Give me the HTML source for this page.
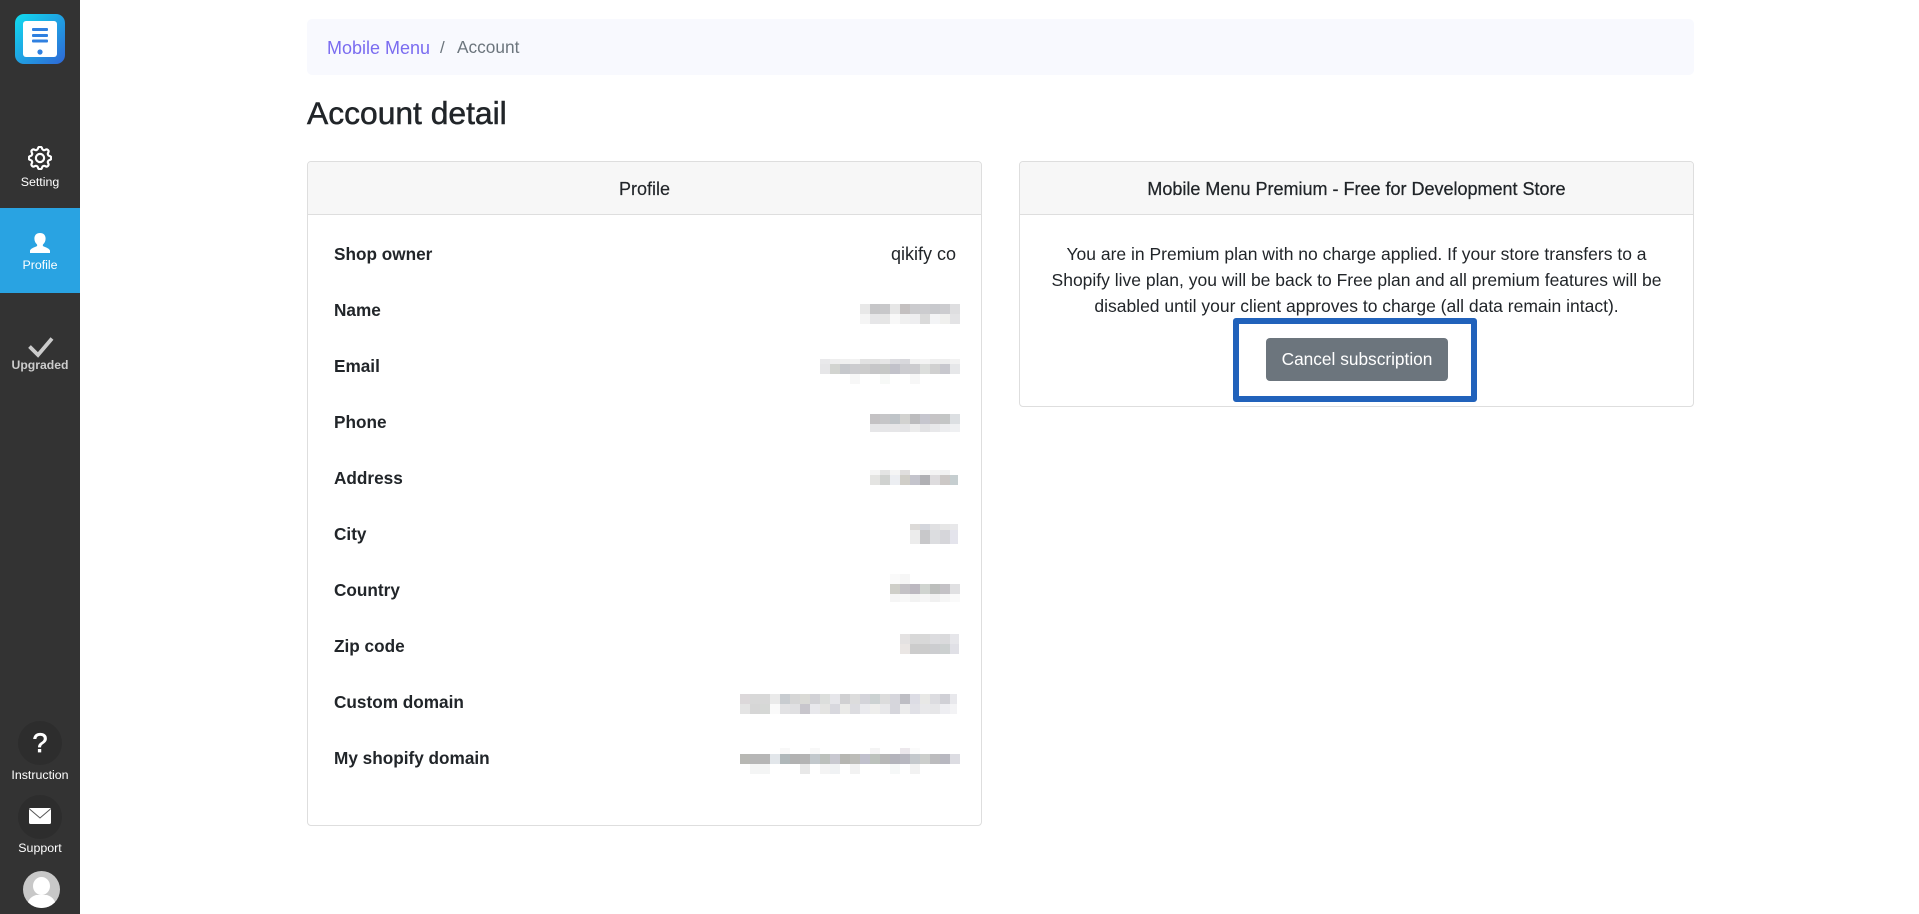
<!DOCTYPE html>
<html lang="en"><head><meta charset="utf-8"><title>Account detail</title>
<style>
*{box-sizing:border-box}
html,body{margin:0;padding:0;width:1919px;height:914px;overflow:hidden;background:#fff;font-family:"Liberation Sans",sans-serif;color:#212529}
.a{position:absolute;white-space:nowrap;line-height:1}
.side{position:absolute;left:0;top:0;width:80px;height:914px;background:#333}
.act{position:absolute;left:0;top:208px;width:80px;height:85px;background:#29a3e2}
.n{position:absolute;left:0;width:80px;text-align:center;font-size:12.400px;line-height:14px;color:#fff}
.card{position:absolute;background:#fff;border:1px solid #dedede;border-radius:4px;overflow:hidden}
.hd{position:absolute;left:0;top:0;right:0;height:53px;background:#f7f7f7;border-bottom:1px solid #dedede;text-align:center;font-size:18px;line-height:54px}
.l{position:absolute;left:334px;font-weight:bold;font-size:17.200px;line-height:20px;color:#212529}
.c{position:absolute;left:1019px;width:675px;text-align:center;font-size:17.500px;line-height:26px;white-space:nowrap}
svg.o{position:absolute;left:0;top:0}
svg.o rect{width:10px;height:10px}
</style></head><body>
<div class="side"></div><div class="act"></div>

<svg class="a" style="left:15px;top:14px" width="50" height="50" viewBox="0 0 50 50"><defs><linearGradient id="g" x1="0" y1="0" x2="1" y2="1"><stop offset="0" stop-color="#10dcef"/><stop offset="1" stop-color="#2f66d6"/></linearGradient></defs><rect width="50" height="50" rx="9" fill="url(#g)"/><rect x="8" y="7" width="34" height="36" rx="3" fill="#fff"/><g fill="#2f80e0"><rect x="17" y="14" width="16" height="3" rx="1"/><rect x="17" y="20" width="16" height="3" rx="1"/><rect x="17" y="25.500" width="16" height="3" rx="1"/><circle cx="25" cy="38" r="2.600"/></g></svg>

<svg class="a" style="left:28px;top:146px" width="24" height="24" viewBox="0 0 16 16" fill="#fff" stroke="#fff" stroke-width=".45"><path d="M8 4.754a3.246 3.246 0 1 0 0 6.492 3.246 3.246 0 0 0 0-6.492zM5.754 8a2.246 2.246 0 1 1 4.492 0 2.246 2.246 0 0 1-4.492 0z"/><path d="M9.796 1.343c-.527-1.79-3.065-1.79-3.592 0l-.094.319a.873.873 0 0 1-1.255.52l-.292-.16c-1.64-.892-3.433.902-2.54 2.541l.159.292a.873.873 0 0 1-.52 1.255l-.319.094c-1.79.527-1.79 3.065 0 3.592l.319.094a.873.873 0 0 1 .52 1.255l-.16.292c-.892 1.64.901 3.434 2.541 2.54l.292-.159a.873.873 0 0 1 1.255.52l.094.319c.527 1.79 3.065 1.79 3.592 0l.094-.319a.873.873 0 0 1 1.255-.52l.292.16c1.64.893 3.434-.902 2.54-2.541l-.159-.292a.873.873 0 0 1 .52-1.255l.319-.094c1.79-.527 1.79-3.065 0-3.592l-.319-.094a.873.873 0 0 1-.52-1.255l.16-.292c.893-1.64-.902-3.433-2.541-2.54l-.292.159a.873.873 0 0 1-1.255-.52l-.094-.319zm-2.633.283c.246-.835 1.428-.835 1.674 0l.094.319a1.873 1.873 0 0 0 2.693 1.115l.291-.16c.764-.415 1.6.42 1.184 1.185l-.159.292a1.873 1.873 0 0 0 1.116 2.692l.318.094c.835.246.835 1.428 0 1.674l-.319.094a1.873 1.873 0 0 0-1.115 2.693l.16.291c.415.764-.42 1.6-1.185 1.184l-.291-.159a1.873 1.873 0 0 0-2.693 1.116l-.094.318c-.246.835-1.428.835-1.674 0l-.094-.319a1.873 1.873 0 0 0-2.692-1.115l-.292.16c-.764.415-1.6-.42-1.184-1.185l.159-.291A1.873 1.873 0 0 0 1.945 8.93l-.319-.094c-.835-.246-.835-1.428 0-1.674l.319-.094A1.873 1.873 0 0 0 3.06 4.377l-.16-.292c-.415-.764.42-1.6 1.185-1.184l.292.159a1.873 1.873 0 0 0 2.692-1.115l.094-.319z"/></svg>
<div class="n" style="top:175px">Setting</div>

<svg class="a" style="left:30px;top:233px" width="20" height="20" viewBox="0 0 20 20" fill="#fff"><path d="M10 0c3.600 0 5.600 2.300 5.600 5.600 0 2.400-1.100 4.500-2.500 5.800-.5.600-.4 1.600.4 2 2.300 1 5.500 1.900 6.500 4.100V20H0v-2.500c1-2.200 4.200-3.100 6.500-4.100.8-.4.900-1.400.4-2C5.500 10.100 4.400 8 4.400 5.600 4.400 2.300 6.400 0 10 0z"/></svg>
<div class="n" style="top:258px">Profile</div>

<svg class="a" style="left:27px;top:337px" width="27" height="22" viewBox="0 0 27 22"><path d="M2.500 9.500 L11 18 L25 1.500" fill="none" stroke="#ccc" stroke-width="3.800"/></svg>
<div class="n" style="top:358px;font-weight:bold;color:#ccc;font-size:12.200px">Upgraded</div>

<div class="a" style="left:18px;top:721px;width:44px;height:44px;border-radius:50%;background:#2d2d2d"></div>
<div class="a" style="left:18px;top:730px;width:44px;text-align:center;font-size:27px;color:#fff;-webkit-text-stroke:.7px #fff">?</div>
<div class="n" style="top:768px">Instruction</div>

<div class="a" style="left:18px;top:795px;width:44px;height:44px;border-radius:50%;background:#2d2d2d"></div>
<svg class="a" style="left:29px;top:808px" width="22" height="16" viewBox="0 0 22 16"><rect width="22" height="16" rx="1.500" fill="#fff"/><path d="M.5 1 L11 10 L21.500 1" fill="none" stroke="#555" stroke-width="1"/></svg>
<div class="n" style="top:841px">Support</div>

<svg class="a" style="left:23px;top:871px" width="37" height="37" viewBox="0 0 37 37"><circle cx="18.500" cy="18.500" r="18.500" fill="#c8c8c8"/><clipPath id="cp"><circle cx="18.500" cy="18.500" r="18.500"/></clipPath><g clip-path="url(#cp)" fill="#fff"><ellipse cx="18.500" cy="15" rx="8.500" ry="9"/><path d="M4 37c0-7 3-11 9-13h11c6 2 9 6 9 13z"/></g></svg>

<div class="a" style="left:307px;top:19px;width:1387px;height:56px;background:#f8f9fe;border-radius:5px"></div>
<div class="a" style="left:327px;top:39px;font-size:18px;color:#7a6cf0">Mobile Menu</div>
<div class="a" style="left:440px;top:39px;font-size:17px;color:#6c757d">/</div>
<div class="a" style="left:457px;top:39px;font-size:17.300px;color:#6c757d">Account</div>

<div class="a" style="left:307px;top:98px;font-size:31.800px;font-weight:normal;-webkit-text-stroke:.5px #212529;color:#212529">Account detail</div>

<div class="card" style="left:307px;top:161px;width:675px;height:665px"><div class="hd" style="-webkit-text-stroke:.15px #212529">Profile</div></div>
<div class="card" style="left:1019px;top:161px;width:675px;height:246px"><div class="hd" style="-webkit-text-stroke:.25px #212529">Mobile Menu Premium - Free for Development Store</div></div>

<div class="l" style="top:244px">Shop owner</div>
<div class="l" style="top:300px">Name</div>
<div class="l" style="top:356px">Email</div>
<div class="l" style="top:412px">Phone</div>
<div class="l" style="top:468px">Address</div>
<div class="l" style="top:524px">City</div>
<div class="l" style="top:580px">Country</div>
<div class="l" style="top:636px">Zip code</div>
<div class="l" style="top:692px">Custom domain</div>
<div class="l" style="top:748px">My shopify domain</div>
<div class="a" style="right:963px;top:245px;font-size:18px">qikify co</div>

<div class="c" style="top:241px">You are in Premium plan with no charge applied. If your store transfers to a</div>
<div class="c" style="top:267px">Shopify live plan, you will be back to Free plan and all premium features will be</div>
<div class="c" style="top:293px">disabled until your client approves to charge (all data remain intact).</div>

<div class="a" style="left:1266px;top:338px;width:182px;height:43px;background:#6c757d;border-radius:4px;color:#fff;font-size:17.300px;line-height:43px;text-align:center">Cancel subscription</div>
<div class="a" style="left:1233px;top:318px;width:244px;height:84px;border:6px solid #2162bb;border-radius:3px"></div>

<svg class="o" width="1919" height="914" shape-rendering="crispEdges">
<g transform="translate(860,304)"><rect x="0" fill="#e8e8e8"/><rect x="10" fill="#c6c6c8"/><rect x="20" fill="#c8c8ca"/><rect x="30" fill="#e6e6e6"/><rect x="40" fill="#c4c0c0"/><rect x="50" fill="#cbcbce"/><rect x="60" fill="#cccccf"/><rect x="70" fill="#c8c9cd"/><rect x="80" fill="#cccccf"/><rect x="90" fill="#dedee0"/></g>
<g transform="translate(860,314)"><rect x="0" fill="#f5f5f5"/><rect x="10" fill="#e6e6e8"/><rect x="20" fill="#e6e6e6"/><rect x="30" fill="#f8f8f8"/><rect x="40" fill="#f0f0f0"/><rect x="50" fill="#eeeef0"/><rect x="60" fill="#dadada"/><rect x="70" fill="#f3f4f6"/><rect x="80" fill="#f0f0ee"/><rect x="90" fill="#e3e3e5"/></g>
<g transform="translate(820,359) scale(1,.5)"><rect x="0" fill="#e9e9eb"/><rect x="10" fill="#eeeeee"/><rect x="20" fill="#f0f0f0"/><rect x="30" fill="#f2f2f2"/><rect x="40" fill="#e2e2e2"/><rect x="50" fill="#e2e2e2"/><rect x="60" fill="#e6e6e6"/><rect x="70" fill="#dcdce0"/><rect x="80" fill="#d8d8dc"/><rect x="90" fill="#f2f2f2"/><rect x="100" fill="#f4f4f4"/><rect x="110" fill="#eeeeee"/><rect x="120" fill="#eeeeee"/><rect x="130" fill="#f2f2f2"/></g>
<g transform="translate(820,364)"><rect x="0" fill="#e6e6e8"/><rect x="10" fill="#d2d4d0"/><rect x="20" fill="#c6c8cc"/><rect x="30" fill="#cccccf"/><rect x="40" fill="#cccccc"/><rect x="50" fill="#c6c6c8"/><rect x="60" fill="#c6c8c6"/><rect x="70" fill="#c2c2ca"/><rect x="80" fill="#ccccd0"/><rect x="90" fill="#cccccf"/><rect x="100" fill="#dcdedc"/><rect x="110" fill="#d0d0d0"/><rect x="120" fill="#c8c8ce"/><rect x="130" fill="#e6e7e9"/></g>
<g transform="translate(820,374)"><rect x="30" fill="#f7f7f7"/><rect x="60" fill="#f7f9f7"/><rect x="90" fill="#f7f7f7"/></g>
<g transform="translate(870,414)"><rect x="0" fill="#c4c2c4"/><rect x="10" fill="#c6c6c8"/><rect x="20" fill="#bfc4c8"/><rect x="30" fill="#d2d2d0"/><rect x="40" fill="#bcbcbe"/><rect x="50" fill="#c6c6ce"/><rect x="60" fill="#c6c4c6"/><rect x="70" fill="#c4c6c6"/><rect x="80" fill="#dcdfe2"/></g>
<g transform="translate(870,424) scale(1,.8)"><rect x="0" fill="#e6e6e8"/><rect x="10" fill="#e6e6e8"/><rect x="20" fill="#e6e6e8"/><rect x="30" fill="#e4e4e6"/><rect x="40" fill="#ececec"/><rect x="50" fill="#e2e2e4"/><rect x="60" fill="#e8e8ea"/><rect x="70" fill="#ecedef"/><rect x="80" fill="#eff0f2"/></g>
<g transform="translate(870,470) scale(1,.5)"><rect x="0" fill="#f5f5f5"/><rect x="10" fill="#e4e4e4"/><rect x="20" fill="#f5f5f5"/><rect x="30" fill="#e0dede"/><rect x="50" fill="#f8f8f8"/><rect x="60" fill="#f4f4f4"/><rect x="70" fill="#f2f2f2"/></g>
<g transform="translate(870,475)"><rect x="0" fill="#e4e4e2"/><rect x="10" fill="#d0d2d0"/><rect x="20" fill="#eceef2"/><rect x="30" fill="#d0cec8"/><rect x="40" fill="#c4c4cc"/><rect x="50" fill="#b0b0b4"/><rect x="60" fill="#dedcde"/><rect x="70" fill="#ccc8c6"/><rect x="80" fill="#c6ced0" style="width:8px"/></g>
<g transform="translate(910,524) scale(1,.6)"><rect x="0" fill="#dcdad8"/><rect x="10" fill="#d4d6dc"/><rect x="20" fill="#e0e0e2"/><rect x="30" fill="#e6e6e6"/><rect x="40" fill="#e8e8ea" style="width:8px"/></g>
<g transform="translate(910,530) scale(1,1.400)"><rect x="0" fill="#ececec"/><rect x="10" fill="#c8c8ca"/><rect x="20" fill="#dcdde0"/><rect x="30" fill="#d6d6da"/><rect x="40" fill="#e4e4ec" style="width:8px"/></g>
<g transform="translate(890,574)"><rect x="0" fill="#fafafa"/><rect x="10" fill="#f6f6f6"/></g>
<g transform="translate(890,584)"><rect x="0" fill="#cecec8"/><rect x="10" fill="#c4c2c6"/><rect x="20" fill="#bcb8c0"/><rect x="30" fill="#d0d4d0"/><rect x="40" fill="#bcbebc"/><rect x="50" fill="#c4c2c6"/><rect x="60" fill="#e0e0e2"/></g>
<g transform="translate(890,594) scale(1,.8)"><rect x="0" fill="#f5f5f5"/><rect x="10" fill="#f8f8f8"/><rect x="20" fill="#f2f2f2"/><rect x="30" fill="#f6f6f6"/><rect x="40" fill="#f0f0f0"/><rect x="50" fill="#f6f6f6"/><rect x="60" fill="#fafafa"/></g>
<g transform="translate(900,634)"><rect x="0" fill="#e4e2e2"/><rect x="10" fill="#d8d8d8"/><rect x="20" fill="#d8d8d8"/><rect x="30" fill="#dcdcdf"/><rect x="40" fill="#dadadc"/><rect x="50" fill="#e6e6ea" style="width:9px"/></g>
<g transform="translate(900,644)"><rect x="0" fill="#eae6e4"/><rect x="10" fill="#cccccc"/><rect x="20" fill="#cccccc"/><rect x="30" fill="#cccdd0"/><rect x="40" fill="#ccd0d0"/><rect x="50" fill="#e0e0e6" style="width:9px"/></g>
<g transform="translate(740,694)"><rect x="0" fill="#dcd8da"/><rect x="10" fill="#d8d8d8"/><rect x="20" fill="#d8d8d8"/><rect x="30" fill="#eaeaea"/><rect x="40" fill="#c8ccd0"/><rect x="50" fill="#d6d6d6"/><rect x="60" fill="#dadad6"/><rect x="70" fill="#d2d2d6"/><rect x="80" fill="#dcdedc"/><rect x="90" fill="#e6e6ea"/><rect x="100" fill="#d0d0d2"/><rect x="110" fill="#dcdcdc"/><rect x="120" fill="#d4d4da"/><rect x="130" fill="#ccd2d2"/><rect x="140" fill="#dcdcdc"/><rect x="150" fill="#d6d6dc"/><rect x="160" fill="#bebec4"/><rect x="170" fill="#dcdce4"/><rect x="180" fill="#e8e8e6"/><rect x="190" fill="#dcdce0"/><rect x="200" fill="#d0d0d6"/><rect x="210" fill="#e8e8ec" style="width:7px"/></g>
<g transform="translate(740,704)"><rect x="0" fill="#e4e4e4"/><rect x="10" fill="#d6d6d6"/><rect x="20" fill="#d6d8d6"/><rect x="30" fill="#fafafa"/><rect x="40" fill="#e2e2e4"/><rect x="50" fill="#e0e0e2"/><rect x="60" fill="#c8c6cc"/><rect x="70" fill="#e8e8ec"/><rect x="80" fill="#e4e4e2"/><rect x="90" fill="#d8d8de"/><rect x="100" fill="#eaeae8"/><rect x="110" fill="#dcdce0"/><rect x="120" fill="#eaeaee"/><rect x="130" fill="#eeeeec"/><rect x="140" fill="#e8e8ea"/><rect x="150" fill="#d6d6dc"/><rect x="160" fill="#ececec"/><rect x="170" fill="#e0e0e6"/><rect x="180" fill="#e8e8ea"/><rect x="190" fill="#e6e6e8"/><rect x="200" fill="#eeeef2"/><rect x="210" fill="#f3f3f5" style="width:7px"/></g>
<g transform="translate(740,748) scale(1,.6)"><rect x="40" fill="#f8f8f8"/><rect x="70" fill="#f8f8f8"/><rect x="130" fill="#f4f4f4"/><rect x="160" fill="#ece8ec"/><rect x="170" fill="#fbfbfb"/></g>
<g transform="translate(740,754)"><rect x="0" fill="#b8b8b4"/><rect x="10" fill="#b6b6b6"/><rect x="20" fill="#b6b6b6"/><rect x="30" fill="#e2e6ea"/><rect x="40" fill="#b0b8ba"/><rect x="50" fill="#b2b2b2"/><rect x="60" fill="#b4b4b4"/><rect x="70" fill="#c2c8cc"/><rect x="80" fill="#bcc0bc"/><rect x="90" fill="#c8c8d0"/><rect x="100" fill="#b6b6b2"/><rect x="110" fill="#bcbcb8"/><rect x="120" fill="#c0c0cc"/><rect x="130" fill="#bcc2bc"/><rect x="140" fill="#b8b8b8"/><rect x="150" fill="#b4b4bc"/><rect x="160" fill="#b8b8c0"/><rect x="170" fill="#c4c8cc"/><rect x="180" fill="#cccecc"/><rect x="190" fill="#bcbcbe"/><rect x="200" fill="#b8b8c0"/><rect x="210" fill="#dcdce2"/></g>
<g transform="translate(740,764)"><rect x="10" fill="#f4f5f5"/><rect x="20" fill="#f4f5f5"/><rect x="60" fill="#e8e8e8"/><rect x="80" fill="#f4f4f4"/><rect x="90" fill="#f0f2f4"/><rect x="110" fill="#f2f2f2"/><rect x="150" fill="#f6f8f8"/><rect x="170" fill="#f2f2f2"/></g>
</svg>
</body></html>
